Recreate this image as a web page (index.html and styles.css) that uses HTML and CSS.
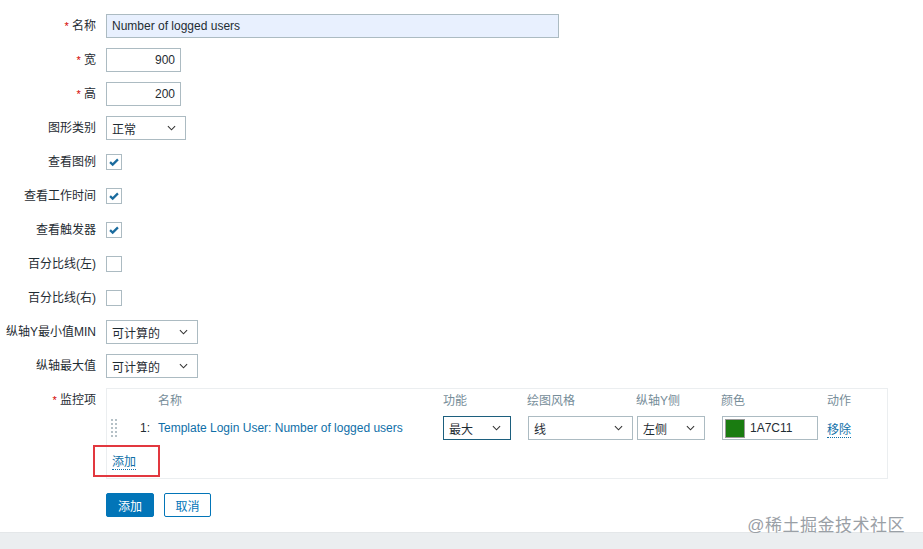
FILE: index.html
```html
<!DOCTYPE html>
<html lang="zh">
<head>
  <meta charset="UTF-8">
  <title>图形</title>
  <link rel="stylesheet" href="styles.css">
</head>
<body>

  <!-- Graph form -->
  <form class="form">
    <label class="form__label"><span class="req">*</span> 名称</label>
    <div class="form__field">
      <div class="input input--name">Number of logged users</div>
    </div>

    <label class="form__label"><span class="req">*</span> 宽</label>
    <div class="form__field">
      <div class="input input--num">900</div>
    </div>

    <label class="form__label"><span class="req">*</span> 高</label>
    <div class="form__field">
      <div class="input input--num">200</div>
    </div>

    <label class="form__label">图形类别</label>
    <div class="form__field">
      <div class="select select--type"><span>正常</span><svg class="chev" viewBox="0 0 10 6"><path d="M1 1l4 4 4-4"/></svg></div>
    </div>

    <label class="form__label">查看图例</label>
    <div class="form__field">
      <span class="check check--on"><svg viewBox="0 0 16 16"><path d="M3.5 8.2l3 2.8 6-6"/></svg></span>
    </div>

    <label class="form__label">查看工作时间</label>
    <div class="form__field">
      <span class="check check--on"><svg viewBox="0 0 16 16"><path d="M3.5 8.2l3 2.8 6-6"/></svg></span>
    </div>

    <label class="form__label">查看触发器</label>
    <div class="form__field">
      <span class="check check--on"><svg viewBox="0 0 16 16"><path d="M3.5 8.2l3 2.8 6-6"/></svg></span>
    </div>

    <label class="form__label">百分比线(左)</label>
    <div class="form__field">
      <span class="check"></span>
    </div>

    <label class="form__label">百分比线(右)</label>
    <div class="form__field">
      <span class="check"></span>
    </div>

    <label class="form__label">纵轴Y最小值MIN</label>
    <div class="form__field">
      <div class="select select--axis"><span>可计算的</span><svg class="chev" viewBox="0 0 10 6"><path d="M1 1l4 4 4-4"/></svg></div>
    </div>

    <label class="form__label">纵轴最大值</label>
    <div class="form__field">
      <div class="select select--axis"><span>可计算的</span><svg class="chev" viewBox="0 0 10 6"><path d="M1 1l4 4 4-4"/></svg></div>
    </div>

    <label class="form__label form__label--top"><span class="req">*</span> 监控项</label>
    <div class="form__field">
      <div class="items">
        <div class="items__head">
          <span></span>
          <span></span>
          <span>名称</span>
          <span>功能</span>
          <span>绘图风格</span>
          <span>纵轴Y侧</span>
          <span>颜色</span>
          <span>动作</span>
        </div>
        <div class="items__row">
          <span class="drag"><svg viewBox="0 0 7 19"><g fill="#b5c1c7"><rect x="0" y="0" width="2" height="2"/><rect x="4" y="0" width="2" height="2"/><rect x="0" y="4" width="2" height="2"/><rect x="4" y="4" width="2" height="2"/><rect x="0" y="8" width="2" height="2"/><rect x="4" y="8" width="2" height="2"/><rect x="0" y="12" width="2" height="2"/><rect x="4" y="12" width="2" height="2"/><rect x="0" y="16" width="2" height="2"/><rect x="4" y="16" width="2" height="2"/></g></svg></span>
          <span class="num">1:</span>
          <span><a class="link" href="#">Template Login User: Number of logged users</a></span>
          <span><div class="select select--func select--focus"><span>最大</span><svg class="chev" viewBox="0 0 10 6"><path d="M1 1l4 4 4-4"/></svg></div></span>
          <span><div class="select select--style"><span>线</span><svg class="chev" viewBox="0 0 10 6"><path d="M1 1l4 4 4-4"/></svg></div></span>
          <span><div class="select select--side"><span>左侧</span><svg class="chev" viewBox="0 0 10 6"><path d="M1 1l4 4 4-4"/></svg></div></span>
          <span><div class="color"><span class="color__swatch"></span>1A7C11</div></span>
          <span><a class="link link--dotted" href="#">移除</a></span>
        </div>
        <div class="items__add">
          <a class="link link--dotted" href="#">添加</a>
        </div>
        <div class="mark"></div>
      </div>
    </div>

    <div></div>
    <div class="form__buttons">
      <button type="button" class="btn">添加</button>
      <button type="button" class="btn btn--alt">取消</button>
    </div>
  </form>

  <footer class="footer"></footer>
  <div class="watermark">@稀土掘金技术社区</div>

</body>
</html>
```

FILE: styles.css
```css
body {
  margin: 0;
  font-family: Arial, "Liberation Sans", "Noto Sans CJK SC", sans-serif;
  font-size: 12px;
  color: #1f2c33;
  background: #fff;
  position: relative;
  min-height: 549px;
  overflow: hidden;
}

.form {
  display: grid;
  grid-template-columns: 96px 1fr;
  column-gap: 10px;
  row-gap: 10px;
  padding-top: 14px;
}

.form__label {
  text-align: right;
  line-height: 24px;
  height: 24px;
}

.form__label--top {
  line-height: 24px;
}

.req {
  color: #d40000;
  font-size: 11px;
}

.form__field {
  display: flex;
  align-items: center;
  min-height: 24px;
}

.input {
  box-sizing: border-box;
  height: 24px;
  line-height: 22px;
  border: 1px solid #acbbc2;
  padding: 0 5px;
  background: #fff;
}

.input--name {
  width: 453px;
  background: #e8f0fe;
}

.input--num {
  width: 75px;
  text-align: right;
}

.select {
  box-sizing: border-box;
  height: 24px;
  border: 1px solid #acbbc2;
  padding: 0 9px 0 5px;
  display: flex;
  align-items: center;
  justify-content: space-between;
  background: #fff;
}

.chev {
  width: 9px;
  height: 6px;
  fill: none;
  stroke: #333;
  stroke-width: 1.2;
}

.select--type { width: 80px; }
.select--axis { width: 92px; }
.select--func { width: 68px; }
.select--style { width: 105px; margin-left: 1px; }
.select--side { width: 68px; margin-left: 1px; }

.select--focus {
  border-color: #1c5f7e;
}

.check {
  box-sizing: border-box;
  width: 16px;
  height: 16px;
  border: 1px solid #acbbc2;
  background: #fff;
  display: inline-block;
}

.check svg {
  display: block;
  width: 14px;
  height: 14px;
  fill: none;
  stroke: #1a6b9e;
  stroke-width: 2.6;
}

/* Items table */
.items {
  position: relative;
  box-sizing: border-box;
  width: 782px;
  border: 1px solid #ebeef0;
  padding: 5px 0 9px 4px;
}

.items__head,
.items__row {
  display: grid;
  grid-template-columns: 22px 25px 285px 84px 109px 85px 106px auto;
  align-items: center;
}

.items__head {
  color: #768d99;
  line-height: 14px;
  height: 14px;
}

.items__row {
  margin-top: 8px;
  height: 24px;
}

.drag svg {
  display: block;
  width: 7px;
  height: 19px;
}

.num {
  text-align: right;
  padding-right: 8px;
}

.link {
  color: #0f6fa8;
  text-decoration: none;
}

.link--dotted {
  border-bottom: 1px dotted #0f6fa8;
}

.color {
  box-sizing: border-box;
  width: 96px;
  height: 24px;
  margin-left: 1px;
  border: 1px solid #acbbc2;
  display: flex;
  align-items: center;
  padding-left: 2px;
}

.color__swatch {
  box-sizing: border-box;
  width: 20px;
  height: 19px;
  background: #1a7c11;
  border: 1px solid #999;
  margin-right: 5px;
}

.items__add {
  margin-top: 15px;
  padding-left: 1px;
  line-height: 14px;
}

.mark {
  position: absolute;
  left: -14px;
  top: 56px;
  width: 63px;
  height: 28px;
  border: 2px solid #e2383f;
}

.form__buttons {
  display: flex;
  gap: 10px;
  margin-top: 4px;
}

.btn {
  box-sizing: border-box;
  height: 24px;
  width: 48px;
  border: 1px solid #0275b8;
  border-radius: 2px;
  background: #0275b8;
  color: #fff;
  font-family: inherit;
  font-size: 12px;
  padding: 0;
}

.btn--alt {
  width: 47px;
  background: #fff;
  color: #0275b8;
}

.footer {
  margin-top: 15px;
  height: 20px;
  background: #ebeef0;
  border-top: 1px solid #e4e7e9;
}

.watermark {
  position: absolute;
  right: 18px;
  top: 511px;
  font-size: 17px;
  color: #9aa0a6;
  letter-spacing: 0.5px;
}
```
